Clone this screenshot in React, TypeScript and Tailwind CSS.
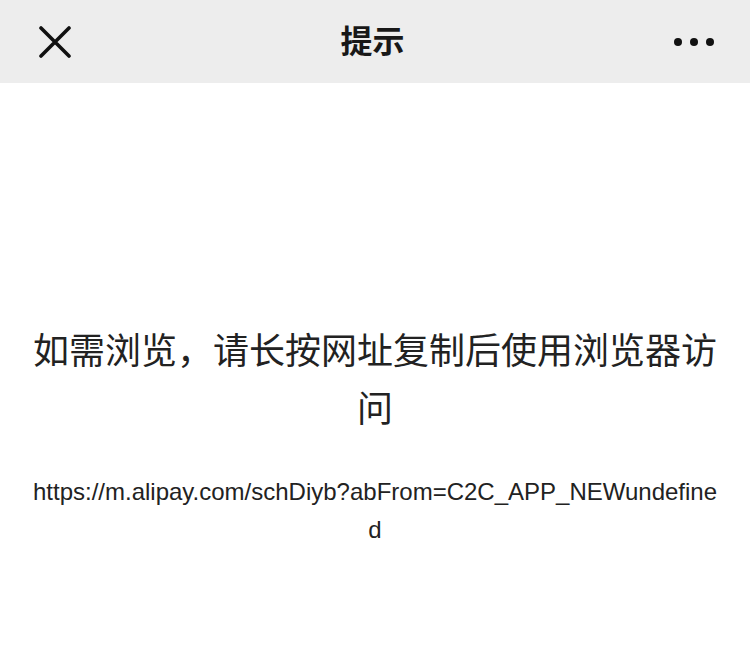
export default function App() {
  return (
    <div
      className="w-[750px] h-[646px] bg-white flex flex-col"
      style={{ fontFamily: '"Liberation Sans", "Noto Sans CJK SC", sans-serif' }}
    >
      <header className="h-[83px] bg-[#ededed] flex items-center justify-between px-[40px] shrink-0">
        <svg width="32" height="32" viewBox="0 0 32 32" className="ml-[-1px]">
          <path d="M2 2 L30 30 M30 2 L2 30" stroke="#111" strokeWidth="3.6" strokeLinecap="round" />
        </svg>
        <h1 className="text-[32px] font-bold text-[#181818] leading-none">提示</h1>
        <div className="flex items-center gap-[8px] mr-[-4px]">
          <span className="w-[8px] h-[8px] rounded-full bg-[#111]" />
          <span className="w-[8px] h-[8px] rounded-full bg-[#111]" />
          <span className="w-[8px] h-[8px] rounded-full bg-[#111]" />
        </div>
      </header>

      <main className="flex flex-col items-center px-[30px] pt-[240px] text-center">
        <p className="text-[36px] leading-[58px] text-[#222]">
          如需浏览，请长按网址复制后使用浏览器访问
        </p>
        <p className="mt-[34px] text-[24px] leading-[38px] text-[#222] break-all">
          https://m.alipay.com/schDiyb?abFrom=C2C_APP_NEWundefined
        </p>
      </main>
    </div>
  )
}
